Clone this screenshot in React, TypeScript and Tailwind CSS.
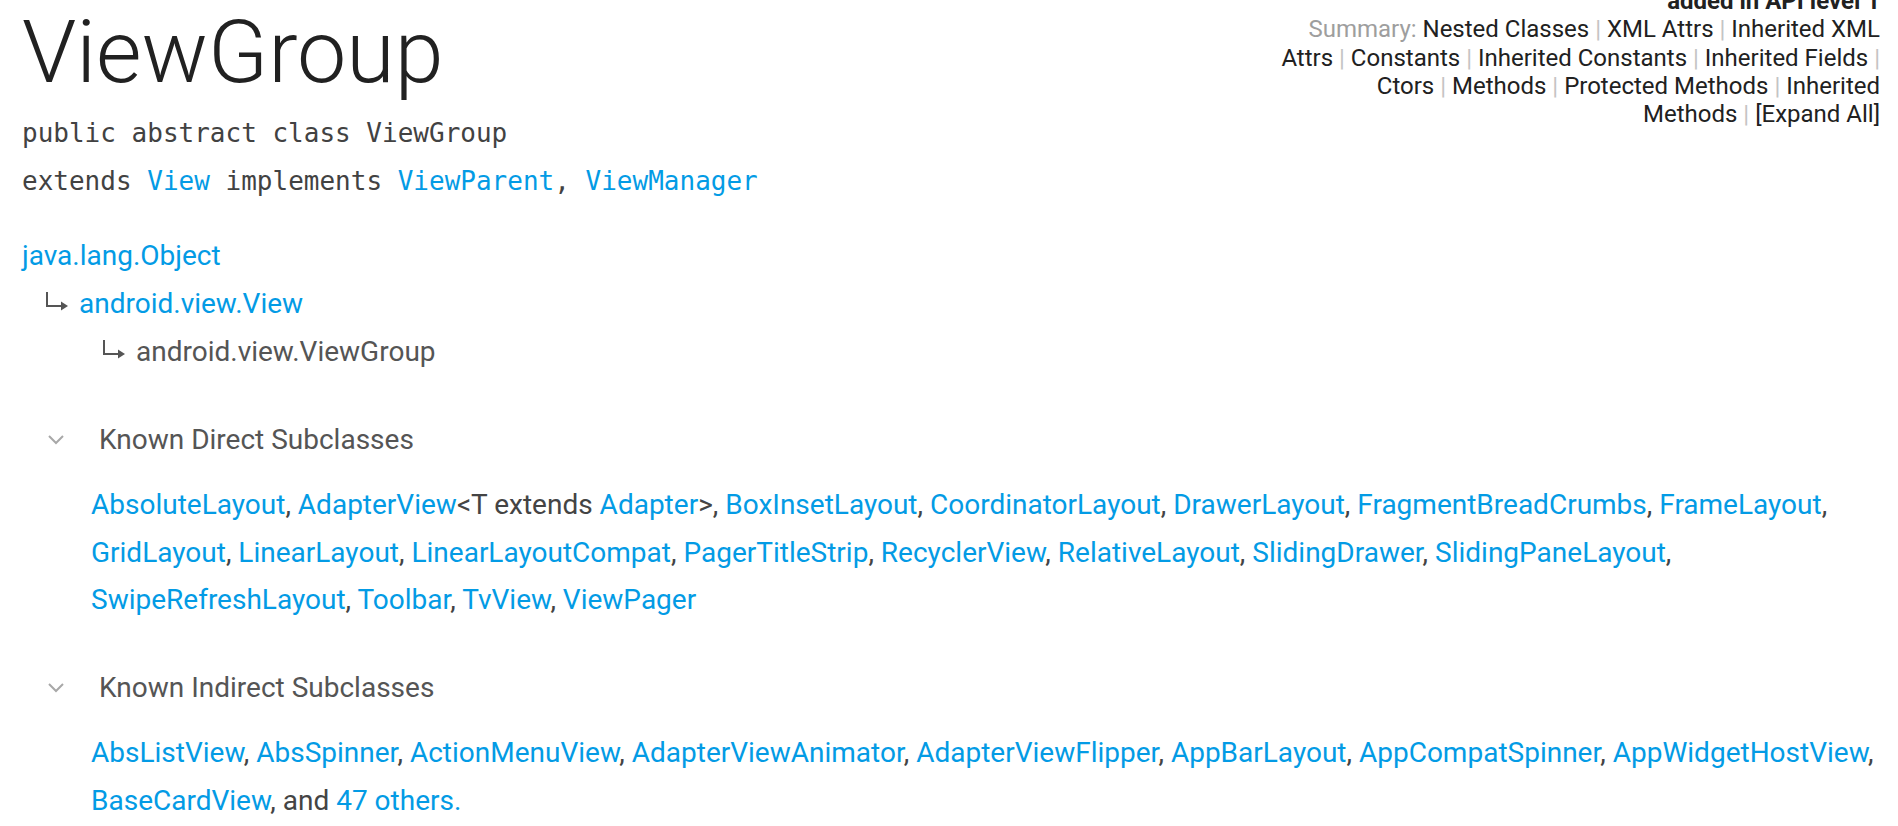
import React from "react";

const L = ({ children }: { children: React.ReactNode }) => (
  <span className="text-[#039be5]">{children}</span>
);

const Sep = () => <span className="text-[#c4c4c4]"> | </span>;

function Chevron() {
  return (
    <svg width="18" height="12" viewBox="0 0 18 12" className="shrink-0">
      <path d="M2 2 L9 9 L16 2" fill="none" stroke="#a8a8a8" strokeWidth="2" />
    </svg>
  );
}

function Arrow() {
  return (
    <svg width="24" height="20" viewBox="0 0 24 20" className="shrink-0">
      <path d="M2 1 V15 H18" fill="none" stroke="#555" strokeWidth="2" />
      <path d="M16 10.5 L23 15 L16 19.5 Z" fill="#555" />
    </svg>
  );
}

function LinkLine({ items, trailing = true }: { items: React.ReactNode[]; trailing?: boolean }) {
  return (
    <div className="whitespace-nowrap">
      {items.map((it, i) => (
        <React.Fragment key={i}>
          {it}
          {(i < items.length - 1 || trailing) && <span className="text-[#444]">, </span>}
        </React.Fragment>
      ))}
    </div>
  );
}

export default function App() {
  return (
    <div className="min-h-[826px] w-full overflow-hidden bg-white font-['Roboto',sans-serif] text-[#444]">
      <div className="flex justify-between pl-[22px] pr-[18px]">
        <div className="flex flex-col">
          <h1 className="mt-[7px] text-[88px] font-light leading-[90px] text-[#212121]">ViewGroup</h1>
          <div className="mt-[12px] font-['DejaVu_Sans_Mono',monospace] text-[26px] leading-[48px] text-[#424242]">
            <div>public abstract class ViewGroup</div>
            <div>
              extends <L>View</L> implements <L>ViewParent</L>, <L>ViewManager</L>
            </div>
          </div>
        </div>
        <div className="-mt-[13px] text-right text-[24px] leading-[28.3px] text-[#212121]">
          <div className="font-bold">added in API level 1</div>
          <div>
            <span className="text-[#9e9e9e]">Summary: </span>Nested Classes<Sep />XML Attrs<Sep />Inherited XML
          </div>
          <div>
            Attrs<Sep />Constants<Sep />Inherited Constants<Sep />Inherited Fields<span className="text-[#c4c4c4]"> |</span>
          </div>
          <div>
            Ctors<Sep />Methods<Sep />Protected Methods<Sep />Inherited
          </div>
          <div>
            Methods<Sep />[Expand All]
          </div>
        </div>
      </div>

      <div className="mt-[27px] pl-[22px] text-[28px] leading-[48px]">
        <div className="text-[#039be5]">java.lang.Object</div>
        <div className="flex items-center pl-[23px]">
          <span className="mr-[10px] flex h-[48px] items-center pb-[6px]">
            <Arrow />
          </span>
          <span className="text-[#039be5]">android.view.View</span>
        </div>
        <div className="flex items-center pl-[80px]">
          <span className="mr-[10px] flex h-[48px] items-center pb-[6px]">
            <Arrow />
          </span>
          <span className="text-[#555]">android.view.ViewGroup</span>
        </div>
      </div>

      <div className="mt-[40px] flex items-center gap-[34px] pl-[47px] text-[28px] leading-[48px] text-[#555]">
        <Chevron />
        <span>Known Direct Subclasses</span>
      </div>
      <div className="mt-[17px] pl-[91px] text-[28px] leading-[47.7px]">
        <LinkLine
          items={[
            <L>AbsoluteLayout</L>,
            <>
              <L>AdapterView</L>&lt;T extends <L>Adapter</L>&gt;
            </>,
            <L>BoxInsetLayout</L>,
            <L>CoordinatorLayout</L>,
            <L>DrawerLayout</L>,
            <L>FragmentBreadCrumbs</L>,
            <L>FrameLayout</L>,
          ]}
        />
        <LinkLine
          items={[
            <L>GridLayout</L>,
            <L>LinearLayout</L>,
            <L>LinearLayoutCompat</L>,
            <L>PagerTitleStrip</L>,
            <L>RecyclerView</L>,
            <L>RelativeLayout</L>,
            <L>SlidingDrawer</L>,
            <L>SlidingPaneLayout</L>,
          ]}
        />
        <LinkLine
          trailing={false}
          items={[<L>SwipeRefreshLayout</L>, <L>Toolbar</L>, <L>TvView</L>, <L>ViewPager</L>]}
        />
      </div>

      <div className="mt-[40px] flex items-center gap-[34px] pl-[47px] text-[28px] leading-[48px] text-[#555]">
        <Chevron />
        <span>Known Indirect Subclasses</span>
      </div>
      <div className="mt-[17px] pl-[91px] text-[28px] leading-[47.7px]">
        <LinkLine
          items={[
            <L>AbsListView</L>,
            <L>AbsSpinner</L>,
            <L>ActionMenuView</L>,
            <L>AdapterViewAnimator</L>,
            <L>AdapterViewFlipper</L>,
            <L>AppBarLayout</L>,
            <L>AppCompatSpinner</L>,
            <L>AppWidgetHostView</L>,
          ]}
        />
        <div className="whitespace-nowrap">
          <L>BaseCardView</L>
          <span className="text-[#444]">, and </span>
          <L>47 others.</L>
        </div>
      </div>
    </div>
  );
}
